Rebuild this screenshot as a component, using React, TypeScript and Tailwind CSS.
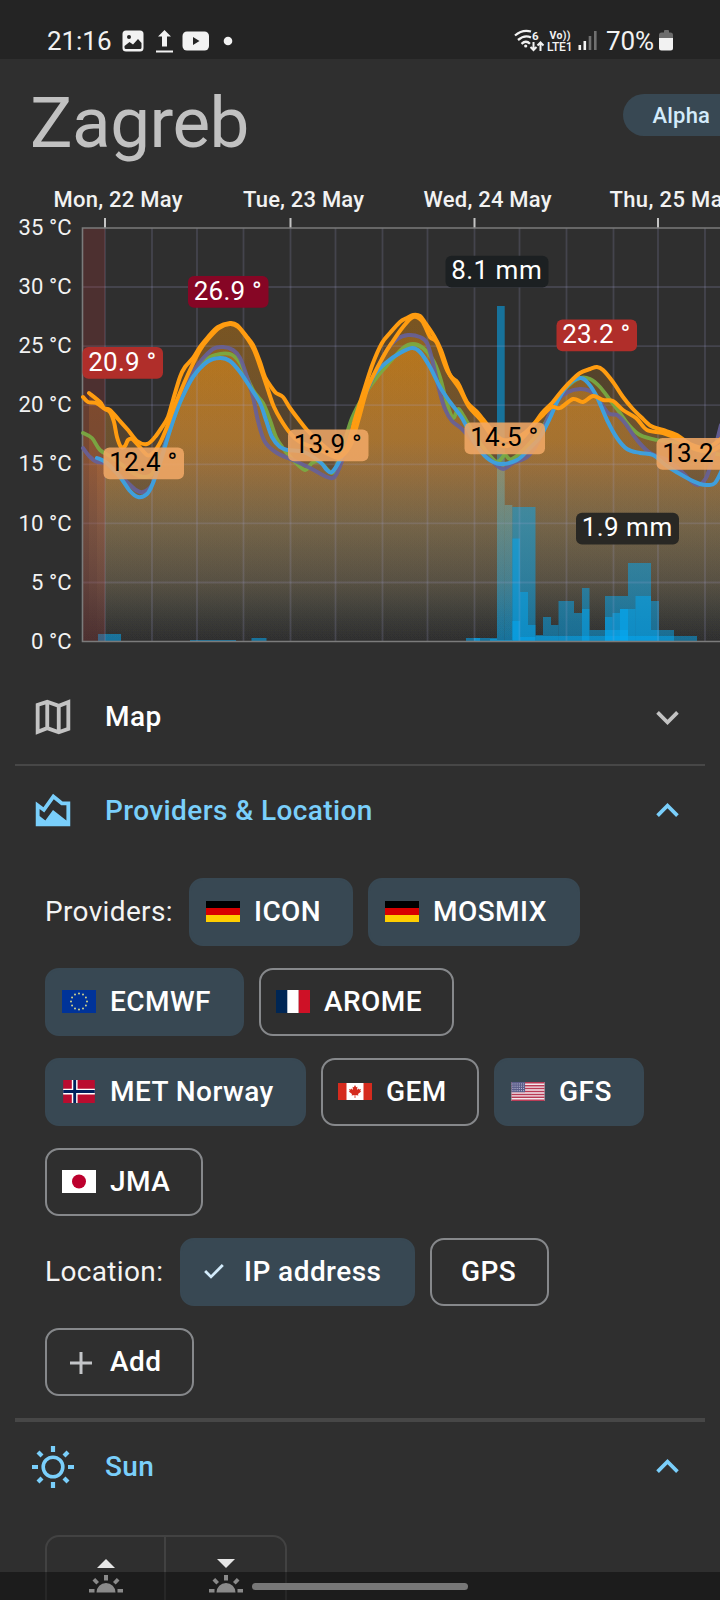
import React, { useState } from "react";
import clsx from "clsx";

type Point = [number, number];

const GRID_X = [105, 152, 197, 243.5, 290.5, 335.5, 382.5, 427.5, 474.5, 519.5, 566.5, 613.5, 658, 705];
const TEMPS = [35, 30, 25, 20, 15, 10, 5, 0];

const DAYS = [
    { label: "Mon, 22 May", x: 53.5, width: 129, tick: 105 },
    { label: "Tue, 23 May", x: 243, width: 121, tick: 290.5 },
    { label: "Wed, 24 May", x: 423.5, width: 128, tick: 474.5 },
    { label: "Thu, 25 May", x: 609.5, width: 124, tick: 658 },
];

const orangeA: Point[] = [
    [89, 393], [100, 402], [104, 408], [110, 410], [119, 420], [128, 430], [137, 441], [147, 444], [155, 437], [162, 427],
    [168, 417], [173, 400], [180, 377], [185, 367], [193, 358], [200, 347], [208, 337], [218, 327], [230, 323], [237, 325],
    [247, 337], [253, 345], [260, 362], [265, 377], [272, 388], [276, 393], [283, 397], [290, 408], [299, 420], [307, 430],
    [317, 440], [335, 455], [341, 455], [348, 444], [355, 419], [365, 387], [373, 363], [382, 343], [390, 333], [400, 322],
    [407, 318], [413, 315], [420, 316], [426, 324], [434, 336], [441, 350], [450, 375], [458, 383], [467, 402], [478, 413],
    [490, 428], [503, 440], [520, 436], [533, 425], [542, 413], [552, 403], [560, 393], [570, 382], [580, 373], [590, 369],
    [597, 367], [603, 370], [613, 382], [623, 397], [632, 408], [641, 417], [651, 426], [663, 430], [677, 435], [690, 444],
    [707, 448], [722, 438],
];

const orangeB: Point[] = [
    [83, 397], [88, 402], [96, 403], [105, 409], [110, 412], [114, 422], [117, 437], [121, 447], [125, 446], [128, 440],
    [132, 439], [137, 444], [147, 455], [153, 453], [160, 443], [167, 427], [173, 410], [182, 388], [190, 370], [200, 350],
    [209, 338], [219, 328], [230, 324], [238, 327], [247, 338], [254, 350], [262, 372], [269, 393], [274, 407], [281, 420],
    [290, 433], [300, 442], [320, 450], [335, 457], [342, 456], [351, 444], [359, 418], [368, 387], [383, 357], [393, 341],
    [403, 327], [413, 317], [422, 321], [430, 337], [437, 343], [447, 370], [459, 388], [469, 407], [480, 419], [492, 436],
    [503, 446], [520, 440], [535, 423], [543, 415], [552, 407], [560, 408], [573, 399], [583, 402], [593, 396], [603, 400],
    [613, 401], [623, 410], [636, 418], [647, 430], [663, 433], [680, 440], [693, 448], [710, 451], [722, 445],
];

const purple: Point[] = [
    [83, 448], [90, 457], [97, 462], [104, 463], [117, 473], [127, 482], [136, 490], [143, 492], [152, 485], [158, 467],
    [168, 434], [180, 397], [190, 377], [200, 362], [213, 349], [223, 347], [233, 350], [240, 358], [247, 377], [253, 397],
    [258, 421], [265, 442], [277, 453], [293, 460], [310, 468], [327, 477], [333, 478], [337, 473], [343, 458], [357, 415],
    [373, 377], [387, 350], [397, 339], [408, 335], [420, 337], [427, 343], [433, 363], [440, 393], [445, 409], [452, 421],
    [463, 430], [480, 450], [493, 462], [503, 469], [513, 463], [527, 457], [538, 442], [548, 417], [558, 400], [568, 392],
    [580, 389], [590, 391], [597, 397], [608, 413], [617, 415], [625, 423], [637, 440], [650, 453], [667, 460], [683, 473],
    [691, 481], [698, 485], [706, 478], [711, 463], [721, 425],
];

const green: Point[] = [
    [83, 433], [92, 438], [100, 450], [113, 458], [133, 473], [145, 477], [153, 473], [160, 457], [170, 430], [177, 410],
    [190, 380], [203, 362], [215, 355], [230, 354], [240, 363], [253, 390], [263, 403], [270, 420], [276, 437], [283, 448],
    [293, 460], [305, 470], [312, 463], [320, 462], [332, 473], [338, 462], [345, 440], [352, 418], [363, 397], [377, 377],
    [390, 362], [403, 348], [413, 344], [423, 348], [433, 360], [440, 377], [447, 403], [453, 418], [458, 409], [463, 415],
    [478, 440], [493, 459], [499, 461], [505, 455], [512, 459], [530, 443], [547, 420], [557, 400], [567, 387], [580, 378],
    [590, 379], [600, 387], [610, 400], [620, 413], [628, 424], [640, 435], [657, 440], [680, 443], [697, 450], [722, 455],
];

const blue: Point[] = [
    [97, 458], [107, 463], [120, 477], [130, 491], [138, 497], [147, 494], [153, 483], [160, 463], [167, 440], [174, 418],
    [182, 398], [193, 377], [207, 362], [220, 358], [230, 361], [240, 372], [250, 387], [260, 403], [266, 420], [272, 437],
    [280, 447], [288, 450], [304, 452], [320, 462], [327, 470], [332, 472], [340, 460], [350, 437], [360, 407], [373, 377],
    [387, 362], [400, 353], [412, 348], [420, 352], [430, 367], [440, 387], [450, 402], [462, 418], [475, 443], [487, 458],
    [500, 464], [517, 460], [530, 448], [540, 437], [550, 418], [558, 400], [568, 385], [580, 378], [588, 383], [597, 397],
    [607, 420], [617, 438], [627, 449], [640, 453], [653, 455], [667, 466], [687, 478], [700, 484], [708, 485], [715, 483],
    [722, 470],
];

// x start, x end, top
const rainBack = [
    [497, 504.7, 306],
    [504.7, 512.3, 505],
    [98, 121, 634],
    [190, 236, 640],
    [251.5, 266.5, 638],
    [466, 497, 638],
    [474, 480, 638],
];

const rain = [
    [490, 497, 639],
    [497, 512, 640],
    [512.3, 535.5, 507],
    [512.3, 520, 538.5],
    [520, 528, 592],
    [528, 535.5, 625],
    [512.3, 520, 621],
    [520, 535.5, 637],
    [535.5, 543, 635],
    [543, 551, 617],
    [551, 558.5, 625],
    [558.5, 574, 601],
    [574, 582, 613],
    [582, 589.5, 588],
    [582, 589.5, 609],
    [589.5, 605, 630],
    [605, 628, 596],
    [605, 612.5, 617],
    [612.5, 620, 613],
    [620, 628, 609],
    [605, 628, 630],
    [628, 651, 563],
    [620, 628, 609],
    [628, 635.5, 609],
    [635.5, 651, 596],
    [651, 659, 601],
    [659, 674, 630],
    [651, 659, 630],
    [674, 697, 636],
    [535.5, 674, 636],
];

const BADGES = [
    { x: 188, y: 276, w: 80.5, text: "26.9 °", box: "fill-[#860625]", color: "fill-white" },
    { x: 82.5, y: 347, w: 80.5, text: "20.9 °", box: "fill-[#b02e2a]", color: "fill-white" },
    { x: 556.5, y: 319.5, w: 80.5, text: "23.2 °", box: "fill-[#b02e2a]", color: "fill-white" },
    { x: 103.5, y: 447.5, w: 80.5, text: "12.4 °", box: "fill-[#f0a765]/88", color: "fill-black" },
    { x: 288, y: 429.5, w: 80.5, text: "13.9 °", box: "fill-[#f0a765]/88", color: "fill-black" },
    { x: 464.5, y: 422.5, w: 80.5, text: "14.5 °", box: "fill-[#f0a765]/88", color: "fill-black" },
    { x: 656.5, y: 438, w: 80.5, text: "13.2 °", box: "fill-[#f0a765]/88", color: "fill-black" },
    { x: 445.5, y: 255.8, w: 103, text: "8.1 mm", box: "fill-[#1c2022]", color: "fill-white" },
    { x: 576, y: 512.8, w: 103, text: "1.9 mm", box: "fill-[#292824]", color: "fill-white" },
];

const smooth = (pts: Point[]) => {
    let d = `M${pts[0][0]} ${pts[0][1]}`;
    for (let i = 0; i < pts.length - 1; i++) {
        const p0 = pts[i - 1] || pts[i];
        const p1 = pts[i];
        const p2 = pts[i + 1];
        const p3 = pts[i + 2] || p2;
        d += `C${p1[0] + (p2[0] - p0[0]) / 6} ${p1[1] + (p2[1] - p0[1]) / 6} ${p2[0] - (p3[0] - p1[0]) / 6} ${
            p2[1] - (p3[1] - p1[1]) / 6
        } ${p2[0]} ${p2[1]}`;
    }
    return d;
};

const area = (pts: Point[]) => `${smooth(pts)}V641H${pts[0][0]}Z`;

const Chart = () => (
    <svg viewBox="0 180 720 490" className="w-[720px] h-[490px] shrink-0 block">
        <defs>
            <linearGradient id="heat" gradientUnits="userSpaceOnUse" x1="0" y1="315" x2="0" y2="641">
                <stop offset="0" stopColor="#ff9808" stopOpacity="0.2" />
                <stop offset="0.38" stopColor="#f7a031" stopOpacity="0.165" />
                <stop offset="0.48" stopColor="#eba248" stopOpacity="0.145" />
                <stop offset="0.64" stopColor="#c8a365" stopOpacity="0.116" />
                <stop offset="0.82" stopColor="#b49d70" stopOpacity="0.07" />
                <stop offset="0.94" stopColor="#a0a080" stopOpacity="0.02" />
                <stop offset="1" stopColor="#a0a080" stopOpacity="0" />
            </linearGradient>
        </defs>

        {DAYS.map((day) => (
            <g key={day.label}>
                <text
                    x={day.x}
                    y="207"
                    textLength={day.width}
                    className="fill-[#f2f2f2] text-[22px] font-medium"
                >
                    {day.label}
                </text>
                <path d={`M${day.tick} 218v10`} className="stroke-[#c4c4c4] stroke-2" />
            </g>
        ))}
        {TEMPS.map((temp, i) => (
            <text
                key={temp}
                x="71.800"
                y={235 + i * 59.1}
                textAnchor="end"
                className="fill-[#f2f2f2] text-[22px] tracking-[0.1px]"
            >
                {temp} °C
            </text>
        ))}

        {rainBack.map(([x1, x2, top], i) => (
            <rect key={i} x={x1} y={top} width={x2 - x1} height={641 - top} className="fill-[#03a9f4]/55" />
        ))}
        {[orangeA, orangeB, purple, green, blue].map((pts, i) => (
            <path key={i} d={area(pts)} fill="url(#heat)" />
        ))}
        {rain.map(([x1, x2, top], i) => (
            <rect key={i} x={x1} y={top} width={x2 - x1} height={641 - top} className="fill-[#03a9f4]/50" />
        ))}

        {/* grid */}
        <g className="stroke-[#a8a8d8]/18 stroke-[1.8]">
            {GRID_X.map((x) => (
                <path key={x} d={`M${x} 228V641`} />
            ))}
            {TEMPS.slice(1, 7).map((temp, i) => (
                <path key={temp} d={`M83 ${287 + i * 59.1}H720`} />
            ))}
        </g>
        <rect x="83" y="228" width="22" height="413" className="fill-[#a83838]/26" />
        <path d="M720 228H82.5V641.5H720" className="fill-none stroke-[#7b7b7b] stroke-[1.6]" />

        <g className="fill-none" strokeLinecap="round" strokeLinejoin="round">
            <path d={smooth(green)} className="stroke-[#79ad42]/90 stroke-[3.8]" />
            <path d={smooth(purple)} className="stroke-[#66609a]/90 stroke-[4]" />
            <path d={smooth(blue)} className="stroke-[#3f9fdc] stroke-[4]" />
            <path d={smooth(orangeB)} className="stroke-[#ff9c10] stroke-[4]" />
            <path d={smooth(orangeA)} className="stroke-[#ff9c10] stroke-[4]" />
        </g>

        {BADGES.map((badge) => (
            <g key={badge.text}>
                <rect x={badge.x} y={badge.y} width={badge.w} height="31.8" rx="6" className={badge.box} />
                <text
                    x={badge.x + 5.7}
                    y={badge.y + 23.6}
                    textLength={badge.w - 12.5}
                    className={clsx("text-[26px]", badge.color)}
                >
                    {badge.text}
                </text>
            </g>
        ))}
    </svg>
);

const StatusBar = () => (
    <div className="h-[59px] shrink-0 bg-[#242424] text-[#f2f2f2]">
        <svg viewBox="0 0 720 59" className="w-full h-full block fill-current">
            <text x="47" y="49.5" textLength="64.500" className="text-[26px]">
                21:16
            </text>
            <rect x="122.5" y="30.5" width="21" height="21" rx="3.5" />
            <circle cx="129" cy="37" r="2" className="fill-[#242424]" />
            <path d="M124.5 46l5-4 3.5 2.5 5-5.500 3.500 4v4.500q0 1.500-1.500 1.500h-14q-1.500 0-1.500-1.500z" className="fill-[#242424]" />
            <path d="M164.500 30l6.500 6.500h-4v10h-5v-10h-4zM156 50.500h17v2h-17z" />
            <rect x="182.500" y="31.500" width="26.500" height="19" rx="4.500" />
            <path d="M193 37l6.500 4-6.500 4z" className="fill-[#242424]" />
            <circle cx="228" cy="41" r="4.300" />

            <g className="fill-none stroke-current stroke-[2.300]">
                <path d="M515 35.500q7.500-6.500 16-4M518 40q6.500-5.500 13-2.500M521.500 43.800q4.500-4 8.500 0" />
                <path d="M533.500 42v7.500M530.500 47l3 3 3-3M540.500 51v-8M537.500 45.500l3-3 3 3" strokeWidth="2" />
            </g>
            <circle cx="525.700" cy="46" r="1.600" />
            <text x="532" y="39.500" className="text-[11.500px] font-bold">
                6
            </text>
            <text x="549.500" y="39" textLength="21" className="text-[10.500px] font-bold">
                Vo))
            </text>
            <text x="547" y="51" textLength="25.500" className="text-[12px] font-medium">
                LTE1
            </text>
            <path d="M578.500 45h2.600v5h-2.600zM583.500 41h2.600v9h-2.600z" />
            <path d="M588.700 36h2.600v14h-2.600zM594 31h2.600v19H594z" className="fill-[#707070]" />
            <text x="606" y="49.500" textLength="48" className="text-[26px]">
                70%
            </text>
            <path d="M659 38v-3q0-2.500 2.500-2.500h2.500v-1.500q0-1 1-1h3q1 0 1 1v1.500h1.500q2.500 0 2.500 2.500v3z" className="fill-[#6c6c6c]" />
            <path d="M659 38h14v10q0 2.500-2.500 2.500h-9q-2.500 0-2.500-2.500z" />
        </svg>
    </div>
);

const StarRing = () => (
    <>
        {Array.from({ length: 12 }).map((_, i) => {
            const a = (i * Math.PI) / 6;
            return <circle key={i} cx={17 + 8 * Math.sin(a)} cy={11.5 - 8 * Math.cos(a)} r="0.95" fill="#d9d98a" />;
        })}
    </>
);

const Flag = ({ code }: { code: string }) => {
    switch (code) {
        case "de":
            return (
                <svg viewBox="0 0 34 21" className="w-[34px] h-[21px] mx-auto">
                    <path d="M0 0h34v7H0z" fill="#000" />
                    <path d="M0 7h34v7H0z" fill="#d80000" />
                    <path d="M0 14h34v7H0z" fill="#ffce00" />
                </svg>
            );
        case "eu":
            return (
                <svg viewBox="0 0 34 23" className="w-[34px] h-[23px]">
                    <path d="M0 0h34v23H0z" fill="#003399" />
                    <StarRing />
                </svg>
            );
        case "fr":
            return (
                <svg viewBox="0 0 34 23" className="w-[34px] h-[23px]">
                    <path d="M0 0h12v23H0z" fill="#002654" />
                    <path d="M11.300 0h11.500v23H11.300z" fill="#fff" />
                    <path d="M22.700 0H34v23H22.700z" fill="#ce1126" />
                </svg>
            );
        case "no":
            return (
                <svg viewBox="0 0 22 16" className="w-[32px] h-[23px] mx-auto">
                    <path d="M0 0h22v16H0z" fill="#ba0c2f" />
                    <path d="M6 0h4v16H6zM0 6h22v4H0z" fill="#fff" />
                    <path d="M7 0h2v16H7zM0 7h22v2H0z" fill="#00205b" />
                </svg>
            );
        case "ca":
            return (
                <svg viewBox="0 0 34 17" className="w-[34px] h-[17px]">
                    <path d="M0 0h34v17H0z" fill="#d52b1e" />
                    <path d="M8.500 0h17v17h-17z" fill="#fff" />
                    <path
                        d="M17 2l1.200 2.300 1.300-.6-.6 3.200 1.700-1.500.4 1 2-.4-.8 2 1 .6-3.200 2.500.4 1.300-3-.4v3h-.8v-3l-3 .4.400-1.300-3.200-2.500 1-.6-.8-2 2 .4.400-1 1.700 1.500-.6-3.200 1.300.6z"
                        fill="#d52b1e"
                    />
                </svg>
            );
        case "us":
            return (
                <svg viewBox="0 0 34 19.500" className="w-[34px] h-[19px]">
                    <path d="M0 0h34v19.500H0z" fill="#f3e9ee" />
                    <path
                        d="M0 .75h34M0 3.750h34M0 6.750h34M0 9.750h34M0 12.750h34M0 15.750h34M0 18.750h34"
                        stroke="#b93b55"
                        strokeWidth="1.500"
                    />
                    <path d="M0 0h14v10.500H0z" fill="#5b5d8a" />
                    <path d="M1 2h12M1 4.300h12M1 6.600h12M1 8.900h12" stroke="#c5c5dc" strokeWidth="1" strokeDasharray="1 1.200" />
                </svg>
            );
        default:
            return (
                <svg viewBox="0 0 34 23" className="w-[34px] h-[23px]">
                    <path d="M0 0h34v23H0z" fill="#fff" />
                    <circle cx="17" cy="11.500" r="7" fill="#bc002d" />
                </svg>
            );
    }
};

const PROVIDERS = [
    { name: "ICON", flag: "de", width: "w-[164px]", active: true },
    { name: "MOSMIX", flag: "de", width: "w-[212px]", active: true },
    { name: "ECMWF", flag: "eu", width: "w-[199px]", active: true },
    { name: "AROME", flag: "fr", width: "w-[195px]", active: false },
    { name: "MET Norway", flag: "no", width: "w-[261px]", active: true },
    { name: "GEM", flag: "ca", width: "w-[158px]", active: false },
    { name: "GFS", flag: "us", width: "w-[150px]", active: true },
    { name: "JMA", flag: "jp", width: "w-[158px]", active: false },
];

const Chip = ({ active, width, children, onClick }: any) => (
    <button
        onClick={onClick}
        className={clsx(
            "h-[67.5px] rounded-[14px] flex items-center shrink-0 whitespace-nowrap text-[28px] tracking-[0.45px] font-medium text-white border-2 cursor-pointer",
            active ? "bg-[#384853] border-[#384853]" : "border-[#86888b]",
            width
        )}
    >
        {children}
    </button>
);

const Chevron = ({ up }: { up?: boolean }) => (
    <svg viewBox="0 0 24 24" className="w-[45px] h-[45px] fill-current">
        <path
            d={up ? "M12 8l-6 6 1.410 1.410L12 10.830l4.590 4.580L18 14z" : "M16.590 8.590 12 13.170 7.410 8.590 6 10l6 6 6-6z"}
        />
    </svg>
);

const PanelHeader = ({ icon, title, open, height }: any) => (
    <div
        className={clsx(
            "flex items-center pl-[29.5px] pr-[30px] shrink-0",
            open ? "text-[#7acffb]" : "text-[#c3c3c3]",
            height
        )}
    >
        <div className="w-[47px]">{icon}</div>
        <h2 className={clsx("flex-1 ml-[28.5px] text-[28px] tracking-[0.4px] font-medium", !open && "text-white")}>
            {title}
        </h2>
        <Chevron up={open} />
    </div>
);

const HalfSun = () => (
    <svg viewBox="0 0 36 18" className="w-[36px] h-[18px] fill-[#e6e6e6]">
        <path d="M8.500 17.500a9.500 9.500 0 0 1 19 0zM16 0h4v5.500h-4zM1 14h5.500v3.500H1zM29.500 14H35v3.500h-5.500zM4.500 5.500l2.700-2.500 3.800 3.900-2.700 2.600zM31.500 5.500l-2.700-2.500L25 6.900l2.700 2.600z" />
    </svg>
);

const App = () => {
    const [active, setActive] = useState<string[]>(PROVIDERS.filter((p) => p.active).map((p) => p.name));

    const toggle = (name: string) => {
        setActive(active.includes(name) ? active.filter((n) => n !== name) : [...active, name]);
    };

    return (
        <div className="relative w-[720px] h-[1600px] overflow-hidden flex flex-col bg-[#2f2f2f] font-['Roboto',sans-serif]">
            <StatusBar />
            <header className="h-[121px] shrink-0 flex items-start justify-between pl-[30px]">
                <h1 className="mt-[21.5px] text-[71px] leading-[84px] tracking-[-0.5px] text-[#c1c1c1]">Zagreb</h1>
                <div className="mt-[35px] w-[97.5px] h-[42px] rounded-l-full bg-[#384853] text-[#d3ebfb] text-[22px] tracking-[0.2px] font-medium flex items-center pl-[30px]">
                    Alpha
                </div>
            </header>

            <Chart />

            <PanelHeader
                title="Map"
                height="h-[94px]"
                icon={
                    <svg viewBox="0 0 24 24" className="w-[46px] h-[46px] fill-current">
                        <path d="M15 5.100 9 3 3 5.020v16.200l6-2.330 6 2.100 6-2.020V2.770L15 5.100zm-5 .360 4 1.400v11.680l-4-1.400V5.460zm-5 .990 3-1.010v11.700l-3 1.160V6.450zm14 11.090-3 1.010V6.860l3-1.160v11.840z" />
                    </svg>
                }
            />
            <div className="h-0.5 mx-[15px] shrink-0 bg-[#474747]" />

            <PanelHeader
                title="Providers & Location"
                open
                height="h-[89px]"
                icon={
                    <svg viewBox="0 0 24 24" className="w-[46px] h-[46px] fill-current">
                        <path d="M17 7l-5-4-5 7-4-3v13h18V7h-4zm2 9.950-7-5.450L8 17l-3-2.400V11l2.440 1.830L12.400 5.880 16.300 9H19v7.950z" />
                    </svg>
                }
            />
            <div className="pt-[23px] pb-[22.5px] px-[45px] shrink-0 flex flex-col gap-y-[22.5px]">
                <div className="flex flex-wrap items-center gap-x-[15px] gap-y-[22.5px]">
                    <span className="w-[129px] text-[28px] tracking-[0.35px] text-[#f4f4f4]">Providers:</span>
                    {PROVIDERS.map((provider) => (
                        <Chip
                            key={provider.name}
                            width={provider.width}
                            active={active.includes(provider.name)}
                            onClick={() => toggle(provider.name)}
                        >
                            <span className="w-[34px] ml-[15px] mr-[14px]">
                                <Flag code={provider.flag} />
                            </span>
                            {provider.name}
                        </Chip>
                    ))}
                </div>
                <div className="flex flex-wrap items-center gap-x-[15px] gap-y-[22.5px]">
                    <span className="w-[120px] text-[28px] tracking-[0.35px] text-[#f4f4f4]">Location:</span>
                    <Chip active width="w-[235px]">
                        <svg viewBox="0 0 26 26" className="w-[26px] h-[26px] ml-[19px] mr-[17px] fill-[#d3ebfb]">
                            <path d="M10 15.900 5.100 11l-2 2L10 19.800 22.800 7.100l-2-2z" />
                        </svg>
                        IP address
                    </Chip>
                    <Chip width="w-[118.5px] pl-[29px]">GPS</Chip>
                    <Chip width="w-[148.5px]">
                        <svg viewBox="0 0 22 22" className="w-[22px] h-[22px] ml-[23px] mr-[18px] mt-[3px] fill-[#c3c5c8]">
                            <path d="M9.500 0h3v9.500H22v3h-9.500V22h-3v-9.500H0v-3h9.500z" />
                        </svg>
                        Add
                    </Chip>
                </div>
            </div>
            <div className="h-1 mx-[15px] shrink-0 bg-[#474747]" />

            <PanelHeader
                title="Sun"
                open
                height="h-[89px]"
                icon={
                    <svg viewBox="-23 -23 46 46" className="w-[46px] h-[46px] fill-none stroke-current">
                        <circle r="9.800" strokeWidth="3.600" />
                        <path d="M0-21v6M0 21v-6M-21 0h6M21 0h-6M-15-15l4 4M15-15l-4 4M-15 15l4-4M15 15l-4-4" strokeWidth="4.200" />
                    </svg>
                }
            />
            <div className="mt-[24px] ml-[45px] w-[242px] h-[140px] shrink-0 rounded-[14px] border-2 border-[#424242] grid grid-cols-2">
                <div className="flex flex-col items-center pt-[22px] gap-[7px] border-r-2 border-[#424242]">
                    <svg viewBox="0 0 18 9" className="w-[18px] h-[9px] fill-[#e6e6e6]">
                        <path d="M9 0l9 9H0z" />
                    </svg>
                    <HalfSun />
                </div>
                <div className="flex flex-col items-center pt-[22px] gap-[7px]">
                    <svg viewBox="0 0 18 9" className="w-[18px] h-[9px] fill-[#e6e6e6]">
                        <path d="M9 9l9-9H0z" />
                    </svg>
                    <HalfSun />
                </div>
            </div>

            {/* gesture bar */}
            <div className="absolute inset-x-0 bottom-0 h-[28px] bg-black/40 flex justify-center pt-[11px]">
                <div className="w-[216px] h-[7px] rounded-full bg-[#777777]" />
            </div>
        </div>
    );
};

export default App;
